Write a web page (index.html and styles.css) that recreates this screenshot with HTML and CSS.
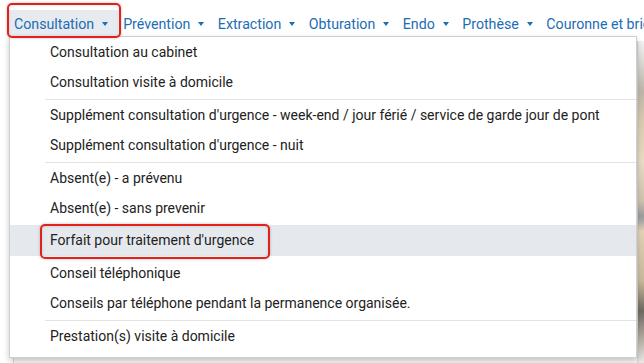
FILE: index.html
```html
<!DOCTYPE html>
<html lang="fr">
  <head>
    <meta charset="UTF-8" />
    <meta name="viewport" content="width=device-width, initial-scale=1.0" />
    <title>Actes - Consultation</title>
    <link rel="stylesheet" href="styles.css">
  </head>

  <body>
    <nav class="menubar">
      <ul class="menu">
        <li class="menu-item open">
          <a href="#" class="menu-link">Consultation<span class="caret"></span></a>
          <div class="dropdown">
            <a href="#" class="dropdown-item">Consultation au cabinet</a>
            <a href="#" class="dropdown-item">Consultation visite à domicile</a>
            <div class="divider"></div>
            <a href="#" class="dropdown-item">Supplément consultation d'urgence - week-end / jour férié / service de garde jour de pont</a>
            <a href="#" class="dropdown-item">Supplément consultation d'urgence - nuit</a>
            <div class="divider"></div>
            <a href="#" class="dropdown-item">Absent(e) - a prévenu</a>
            <a href="#" class="dropdown-item">Absent(e) - sans prevenir</a>
            <a href="#" class="dropdown-item active">Forfait pour traitement d'urgence</a>
            <a href="#" class="dropdown-item">Conseil téléphonique</a>
            <a href="#" class="dropdown-item">Conseils par téléphone pendant la permanence organisée.</a>
            <div class="divider"></div>
            <a href="#" class="dropdown-item">Prestation(s) visite à domicile</a>
          </div>
        </li>
        <li class="menu-item"><a href="#" class="menu-link">Prévention<span class="caret"></span></a></li>
        <li class="menu-item"><a href="#" class="menu-link">Extraction<span class="caret"></span></a></li>
        <li class="menu-item"><a href="#" class="menu-link">Obturation<span class="caret"></span></a></li>
        <li class="menu-item"><a href="#" class="menu-link">Endo<span class="caret"></span></a></li>
        <li class="menu-item"><a href="#" class="menu-link">Prothèse<span class="caret"></span></a></li>
        <li class="menu-item"><a href="#" class="menu-link">Couronne et bridge<span class="caret"></span></a></li>
      </ul>
    </nav>

    <div class="page">
      <div class="panel"></div>
      <div class="chart"></div>
    </div>

    <!-- annotations -->
    <div class="mark mark-tab"></div>
    <div class="mark mark-item"></div>
  </body>
</html>
```

FILE: styles.css
```css
body {
  margin: 0;
  font-family: Roboto, "Liberation Sans", sans-serif;
  background: #fff;
  width: 644px;
  height: 363px;
  overflow: hidden;
  position: relative;
}

.menubar {
  padding: 10px 0 0 9px;
  height: 27px;
  white-space: nowrap;
}

.menu {
  display: flex;
  list-style: none;
  margin: 0;
  padding: 0;
}

.menu-item {
  position: relative;
}

.menu-link {
  display: flex;
  align-items: center;
  height: 27px;
  padding: 0 8.5px 0 5px;
  color: #1b6db5;
  font-size: 14.2px;
  text-decoration: none;
  box-sizing: border-box;
  white-space: nowrap;
}

.caret {
  display: inline-block;
  width: 0;
  height: 0;
  margin: 1px 0 0 8px;
  border-left: 3px solid transparent;
  border-right: 3px solid transparent;
  border-top: 4px solid #1b6db5;
}

.menu-item.open .menu-link {
  position: relative;
  z-index: 3;
  padding-right: 10px;
  background: #e7eaee;
}

.dropdown {
  position: absolute;
  z-index: 2;
  top: 26px;
  left: 0;
  width: 628px;
  box-sizing: border-box;
  background: #fff;
  border: 1px solid #cfcfcf;
  padding: 0 0 6px;
  box-shadow: 0 3px 6px rgba(0, 0, 0, 0.22);
}

.dropdown-item {
  display: block;
  height: 30px;
  line-height: 30px;
  padding-left: 40px;
  font-size: 14px;
  color: #222;
  text-decoration: none;
  white-space: nowrap;
}

.dropdown-item.active {
  margin: 2px 0;
  height: 31px;
  line-height: 31px;
  background: #e5e9ed;
}

.divider {
  height: 1px;
  margin: 2px 0 0 35px;
  background: #e3e3e3;
}

.page {
  display: flex;
  height: 326px;
}

.panel {
  flex: 1;
  margin-left: 13px;
  border-left: 1px solid #dcdcdc;
  background: #f9f9f9;
}

.chart {
  width: 6px;
  margin-top: 4px;
  border-left: 1px solid #d5d5d5;
  background: linear-gradient(
    180deg,
    #f2f2f2 0,
    #bdb7aa 50px,
    #d9cbb0 80px,
    #e9dcc4 120px,
    #cfc3ae 160px,
    #9d9d9d 175px,
    #a9a9a9 180px,
    #e3d3b6 190px,
    #c9b99c 240px,
    #6f6a62 270px,
    #b9b3a7 300px,
    #f3f3f3 326px
  );
}

.mark {
  position: absolute;
  z-index: 5;
  border: 2px solid #e3211c;
  border-radius: 5px;
  box-shadow: 0 0 3px rgba(0, 0, 0, 0.25), inset 0 0 3px rgba(0, 0, 0, 0.15);
}

.mark-tab {
  left: 7px;
  top: 3px;
  width: 110px;
  height: 31px;
}

.mark-item {
  left: 40px;
  top: 224px;
  width: 226px;
  height: 31px;
}
```
